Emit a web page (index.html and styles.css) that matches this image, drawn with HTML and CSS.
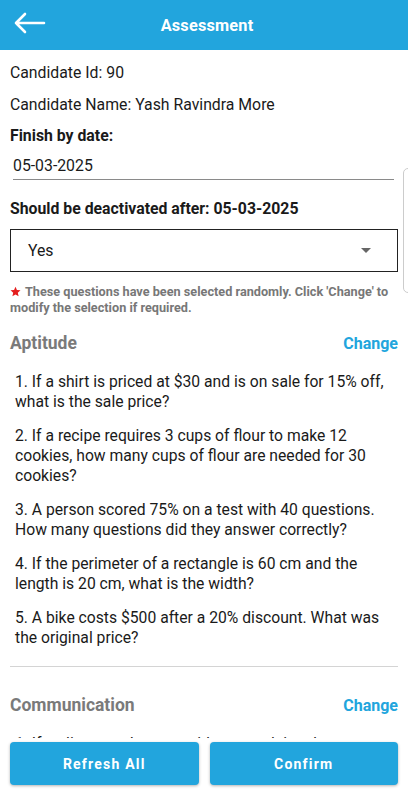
FILE: index.html
```html
<!DOCTYPE html>
<html>
<head>
<meta charset="utf-8">
<link rel="stylesheet" href="styles.css">
</head>
<body>
<div class="app">
  <header class="topbar">
    <svg class="back" width="36" height="24" viewBox="0 0 36 24"><path d="M32 12H4M13 3L4 12L13 21" fill="none" stroke="#fff" stroke-width="2.6" stroke-linecap="round" stroke-linejoin="round"/></svg>
    <h1 class="title">Assessment</h1>
  </header>
  <main class="content">
    <p class="info">Candidate Id: 90</p>
    <p class="info">Candidate Name: Yash Ravindra More</p>
    <p class="label">Finish by date:</p>
    <div class="date-field">05-03-2025</div>
    <p class="label label-deact">Should be deactivated after: 05-03-2025</p>
    <div class="select">
      <span>Yes</span>
      <span class="caret"></span>
    </div>
    <p class="note"><svg class="star" width="11" height="11" viewBox="0 0 24 24"><path d="M12 1.5l3.1 7.2 7.8.7-5.9 5.2 1.8 7.7L12 18.3l-6.8 4 1.8-7.7-5.9-5.2 7.8-.7z" fill="#e41e1e"/></svg>These questions have been selected randomly. Click 'Change' to modify the selection if required.</p>

    <section class="section">
      <div class="sec-head">
        <h2 class="sec-title">Aptitude</h2>
        <span class="change">Change</span>
      </div>
      <ol class="questions">
        <li>1. If a shirt is priced at $30 and is on sale for 15% off, what is the sale price?</li>
        <li>2. If a recipe requires 3 cups of flour to make 12 cookies, how many cups of flour are needed for 30 cookies?</li>
        <li>3. A person scored 75% on a test with 40 questions. How many questions did they answer correctly?</li>
        <li>4. If the perimeter of a rectangle is 60 cm and the length is 20 cm, what is the width?</li>
        <li>5. A bike costs $500 after a 20% discount. What was the original price?</li>
      </ol>
    </section>
    <hr class="divider">
    <section class="section">
      <div class="sec-head sec-head2">
        <h2 class="sec-title">Communication</h2>
        <span class="change">Change</span>
      </div>
      <ol class="questions">
        <li>1. If a client reaches out with a complaint about a delayed order, how would you respond?</li>
      </ol>
    </section>
  </main>
  <footer class="footer">
    <button class="btn">Refresh All</button>
    <button class="btn">Confirm</button>
  </footer>
  <div class="edge-tab"></div>
</div>
</body>
</html>
```
FILE: styles.css
```css
* { box-sizing: border-box; }
html, body { margin: 0; padding: 0; }
body {
  width: 408px;
  height: 800px;
  overflow: hidden;
  font-family: Roboto, "Liberation Sans", sans-serif;
  color: #1a1a1a;
  background: #fff;
}
.app {
  position: relative;
  width: 408px;
  height: 800px;
  overflow: hidden;
  display: flex;
  flex-direction: column;
}
.topbar {
  flex: 0 0 50px;
  height: 50px;
  background: #22a5dd;
  display: flex;
  align-items: center;
  justify-content: center;
  position: relative;
}
.back { position: absolute; left: 12px; top: 11px; }
.title {
  margin: 0 0 0 6px;
  color: #fff;
  font-size: 16.3px;
  font-weight: 700;
  letter-spacing: 0.2px;
}
.content {
  flex: 1 1 auto;
  min-height: 0;
  overflow: hidden;
  padding: 0 10px;
}
.info {
  margin: 0;
  font-size: 15.8px;
  line-height: 20px;
  padding-top: 12px;
}
.info:first-child { padding-top: 13px; }
.label {
  margin: 0;
  font-size: 15.8px;
  font-weight: 700;
  line-height: 20px;
  padding-top: 11px;
}
.date-field {
  margin: 10px 4px 0 3px;
  font-size: 15.8px;
  line-height: 20px;
  padding-bottom: 3px;
  border-bottom: 1.5px solid #8a8a8a;
}
.label-deact { padding-top: 19px; }
.select {
  margin-top: 10px;
  height: 43px;
  border: 1.3px solid #222;
  display: flex;
  align-items: center;
  justify-content: space-between;
  padding: 0 26px 0 17px;
  font-size: 15.8px;
}
.caret {
  width: 0; height: 0;
  border-left: 5px solid transparent;
  border-right: 5px solid transparent;
  border-top: 5px solid #666;
}
.note {
  margin: 12px 0 0 0;
  font-size: 12.7px;
  font-weight: 700;
  color: #777;
  line-height: 15.5px;
}
.star {
  display: inline-block;
  vertical-align: -1px;
  margin-right: 4px;
}
.sec-head {
  display: flex;
  justify-content: space-between;
  align-items: center;
  margin-top: 17px;
}
.sec-head2 { margin-top: 27px; }
.sec-title {
  margin: 0;
  font-size: 17.5px;
  font-weight: 700;
  color: #7a7a7a;
  line-height: 22px;
}
.change {
  color: #22a5dd;
  font-weight: 700;
  font-size: 16px;
}
.questions {
  list-style: none;
  margin: 0;
  padding: 18px 0 0 5px;
}
.questions li {
  font-size: 15.7px;
  line-height: 20px;
  margin-bottom: 14px;
}
.divider {
  border: 0;
  border-top: 1px solid #d4d4d4;
  margin: 18px 0 0;
}
.footer {
  flex: 0 0 62px;
  height: 62px;
  background: #fff;
  display: flex;
  gap: 11px;
  padding: 4px 10px 0;
  align-items: flex-start;
}
.btn {
  flex: 1;
  height: 43px;
  border: 0;
  border-radius: 4px;
  background: #22a5dd;
  color: #fff;
  font-family: Roboto, "Liberation Sans", sans-serif;
  font-weight: 700;
  font-size: 14px;
  letter-spacing: 1.2px;
  box-shadow: 0 1px 3px rgba(0,0,0,0.3);
}
.edge-tab {
  position: absolute;
  left: 403px;
  top: 168px;
  width: 12px;
  height: 125px;
  border: 1px solid #ccc;
  border-radius: 5px;
  background: #fff;
}
```
